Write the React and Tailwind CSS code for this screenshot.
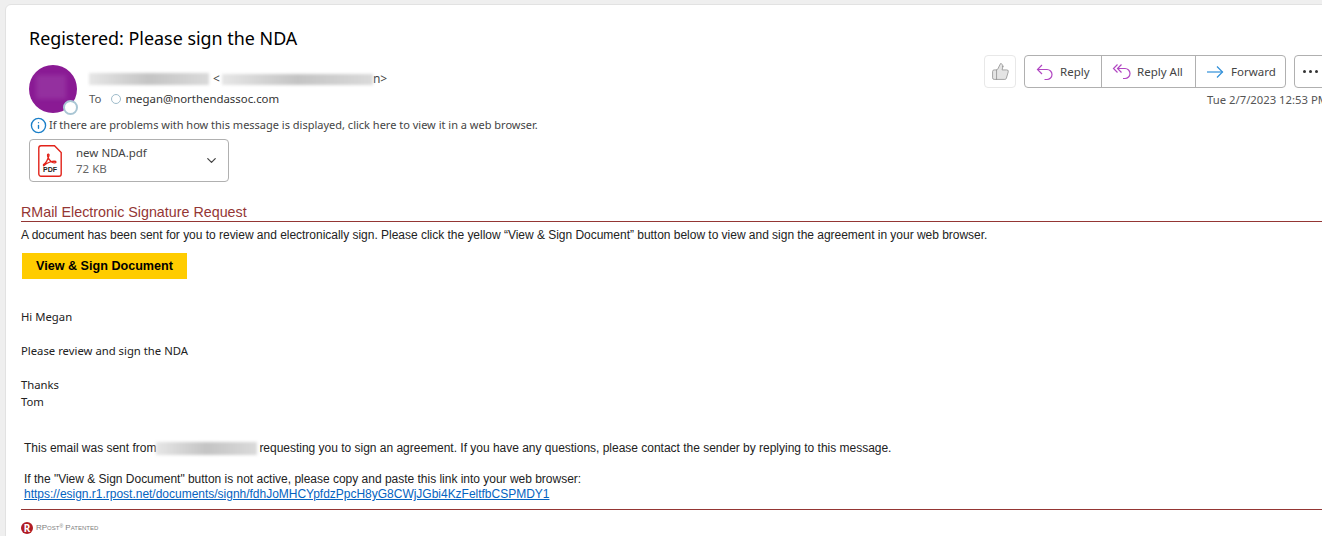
import { ChevronDown, Info, ThumbsUp } from "lucide-react";

const ui = "font-['Noto_Sans',sans-serif]";
const arial = "font-['Liberation_Sans',Arial,sans-serif]";

function Smudge({ className }) {
  return <span className={`inline-block bg-gradient-to-r from-[#e6e6e6] via-[#c4c4c4] to-[#dadada] blur-[1.5px] ${className}`} />;
}

function ReplyIcon() {
  return (
    <svg width="20" height="20" viewBox="0 0 20 20" fill="none" stroke="#b146c2" strokeWidth="1.2" className="shrink-0">
      <path d="M7 3 2.500 7.500 7 12" />
      <path d="M2.500 7.500H12a5 5 0 0 1 5 5 5 5 0 0 1-5 5H9.500" />
    </svg>
  );
}

function ReplyAllIcon() {
  return (
    <svg width="20" height="20" viewBox="0 0 20 20" fill="none" stroke="#b146c2" strokeWidth="1.2" className="shrink-0">
      <path d="M5.500 2.500 1.500 6.500 5.500 10.500" />
      <path d="M9.500 2.500 5.500 6.500 9.500 10.500" />
      <path d="M5.500 6.500H13a5 5 0 0 1 5 5 5 5 0 0 1-5 5h-2" />
    </svg>
  );
}

function ForwardIcon() {
  return (
    <svg width="18" height="18" viewBox="0 0 18 18" fill="none" stroke="#2f8fd8" strokeWidth="1.2" className="shrink-0">
      <path d="M1 9h15.500" />
      <path d="M11 3.500 16.500 9 11 14.500" />
    </svg>
  );
}

function PdfIcon() {
  return (
    <div className="relative h-[32px] w-[24px] shrink-0">
      <svg width="24" height="32" viewBox="0 0 24 32" fill="none">
        <path d="M3 .8h13.500l6.700 6.700V29a2.200 2.200 0 0 1-2.200 2.200H3A2.200 2.200 0 0 1 .8 29V3A2.200 2.200 0 0 1 3 .8Z" fill="#fff" stroke="#e2231a" strokeWidth="1.400" />
        <path d="M5.500 19.500c2-1 4.500-5.500 5.500-9 .4-1.500-1.300-2-1.500-.5-.3 2.500 3 6.500 5 7.500 1.500.7 3.500.5 3.500-.5s-3-1-6 0-5 2.500-6 3.500c-.7.8-.5-.5-.5-1Z" stroke="#e2231a" strokeWidth="1.300" strokeLinejoin="round" />
      </svg>
      <span className={`absolute bottom-[3px] left-0 w-full text-center text-[7px] leading-[8px] font-bold text-[#222] ${arial}`}>PDF</span>
    </div>
  );
}

function RPostLogo() {
  return (
    <span className="flex h-[12px] w-[12px] items-center justify-center rounded-full bg-[#b01c24] text-[10px] leading-none font-bold text-white">R</span>
  );
}

export default function App() {
  return (
    <div className="h-[536px] w-[1322px] overflow-hidden bg-[#efefef] pt-[4px] pl-[5px]">
      <div className="h-[560px] w-[1360px] rounded-tl-[6px] border border-[#e2e2e2] bg-white">
        {/* message header */}
        <div className="flex pl-[23px]">
          <div className="w-[960px] shrink-0">
            <h1 className={`mt-[19px] text-[17.900px] leading-[28px] text-black ${ui}`}>Registered: Please sign the NDA</h1>
            <div className="mt-[13px] flex">
              <div className="relative h-[48px] w-[48px] rounded-full bg-[#8a1a94]">
                <div className="ml-[7px] mt-[10px] h-[24px] w-[30px] bg-[#94309f] blur-[2px]" />
                <span className="absolute right-[-1px] bottom-[-2px] h-[15px] w-[15px] rounded-full border-2 border-[#a9c6d4] bg-white" />
              </div>
              <div className="ml-[12px] pt-[5px]">
                <div className={`flex h-[18px] items-center text-[12px] text-[#444] ${ui}`}>
                  <Smudge className="h-[12px] w-[120px]" />
                  <span className="ml-[4px]">&lt;</span>
                  <Smudge className="ml-[2px] h-[11px] w-[151px]" />
                  <span>n&gt;</span>
                </div>
                <div className={`mt-[2px] flex h-[18px] items-center text-[11.400px] text-[#333] ${ui}`}>
                  <span className="text-[#555]">To</span>
                  <span className="ml-[10px] h-[10px] w-[10px] rounded-full border border-[#9fbccb]" />
                  <span className="ml-[4px]">megan@northendassoc.com</span>
                </div>
              </div>
            </div>
            <div className={`mt-[3px] flex h-[18px] items-center text-[11px] text-[#444] ${ui}`}>
              <Info size={17} strokeWidth={1.9} className="ml-[1px] text-[#1a7fc8]" />
              <span className="ml-[2px]">If there are problems with how this message is displayed, click here to view it in a web browser.</span>
            </div>
            <div className="mt-[5px] flex h-[43px] w-[200px] items-center rounded-[4px] border border-[#b0b0b0] pr-[9px] pl-[8px]">
              <PdfIcon />
              <div className={`ml-[14px] flex-1 text-[11.500px] leading-[16px] text-[#444] ${ui}`}>
                <div>new NDA.pdf</div>
                <div className="text-[#666]">72 KB</div>
              </div>
              <ChevronDown size={15} className="text-[#444]" />
            </div>
          </div>

          {/* actions */}
          <div className="ml-[-5px] w-[340px] shrink-0 pt-[50px]">
            <div className="flex h-[33px]">
              <button className="flex w-[32px] shrink-0 items-center justify-center rounded-[4px] border border-[#e8e8e8]">
                <ThumbsUp size={19} strokeWidth={1} className="fill-[#e4e4e4] text-[#8f8f8f]" />
              </button>
              <div className={`ml-[8px] flex w-[262px] shrink-0 rounded-[4px] border border-[#b0b0b0] text-[11.500px] text-[#444] ${ui}`}>
                <button className="flex w-[77px] shrink-0 items-center gap-[5px] border-r border-[#b0b0b0] pl-[10px]"><ReplyIcon />Reply</button>
                <button className="flex w-[94px] shrink-0 items-center gap-[5px] border-r border-[#b0b0b0] pl-[10px]"><ReplyAllIcon />Reply All</button>
                <button className="flex flex-1 items-center gap-[7px] pl-[10px]"><ForwardIcon />Forward</button>
              </div>
              <button className="ml-[8px] flex w-[40px] shrink-0 items-start justify-start gap-[3px] rounded-[4px] border border-[#b0b0b0] pt-[14px] pl-[8px]">
                <span className="h-[3px] w-[3px] rounded-full bg-[#333]" />
                <span className="h-[3px] w-[3px] rounded-full bg-[#333]" />
                <span className="h-[3px] w-[3px] rounded-full bg-[#333]" />
              </button>
            </div>
            <div className={`mt-[3px] ml-[223px] whitespace-nowrap text-[11.300px] leading-[18px] text-[#555] ${ui}`}>Tue 2/7/2023 12:53 PM</div>
          </div>
        </div>

        {/* message body */}
        <div className="pl-[15px] text-black">
          <div className={`mt-[21px] border-b border-[#943634] text-[14.300px] leading-[18px] text-[#943634] ${arial}`}>RMail Electronic Signature Request</div>
          <p className={`mt-[5px] text-[12px] leading-[16px] tracking-[-0.022px] text-[#222] ${arial}`}>
            A document has been sent for you to review and electronically sign. Please click the yellow “View &amp; Sign Document” button below to view and sign the agreement in your web browser.
          </p>
          <button className={`mt-[10px] ml-[1px] block h-[26px] w-[165px] bg-[#ffcc00] text-[12.600px] font-bold text-black ${arial}`}>View &amp; Sign Document</button>

          <div className={`mt-[29px] text-[11.300px] leading-[17px] text-[#222] ${ui}`}>
            <p>Hi Megan</p>
            <p className="mt-[17px]">Please review and sign the NDA</p>
            <p className="mt-[17px]">Thanks</p>
            <p>Tom</p>
          </div>

          <div className={`mt-[31px] pl-[3px] text-[12px] leading-[15px] tracking-[-0.014px] text-[#222] ${arial}`}>
            <p className="flex items-center whitespace-pre">
              This email was sent from
              <Smudge className="mr-[2px] h-[13px] w-[101px]" />
              requesting you to sign an agreement. If you have any questions, please contact the sender by replying to this message.
            </p>
            <p className="mt-[16px]">If the "View &amp; Sign Document" button is not active, please copy and paste this link into your web browser:</p>
            <a className="block text-[#0563c1] underline">https://esign.r1.rpost.net/documents/signh/fdhJoMHCYpfdzPpcH8yG8CWjJGbi4KzFeltfbCSPMDY1</a>
          </div>

          <div className="mt-[7px] border-t border-[#943634] pt-[12px]">
            <div className="flex items-center gap-[3px]">
              <RPostLogo />
              <span className={`text-[8px] leading-[12px] text-[#808080] [font-variant:small-caps] ${arial}`}>RPost<sup className="text-[5px]">®</sup> Patented</span>
            </div>
          </div>
        </div>
      </div>
    </div>
  );
}
